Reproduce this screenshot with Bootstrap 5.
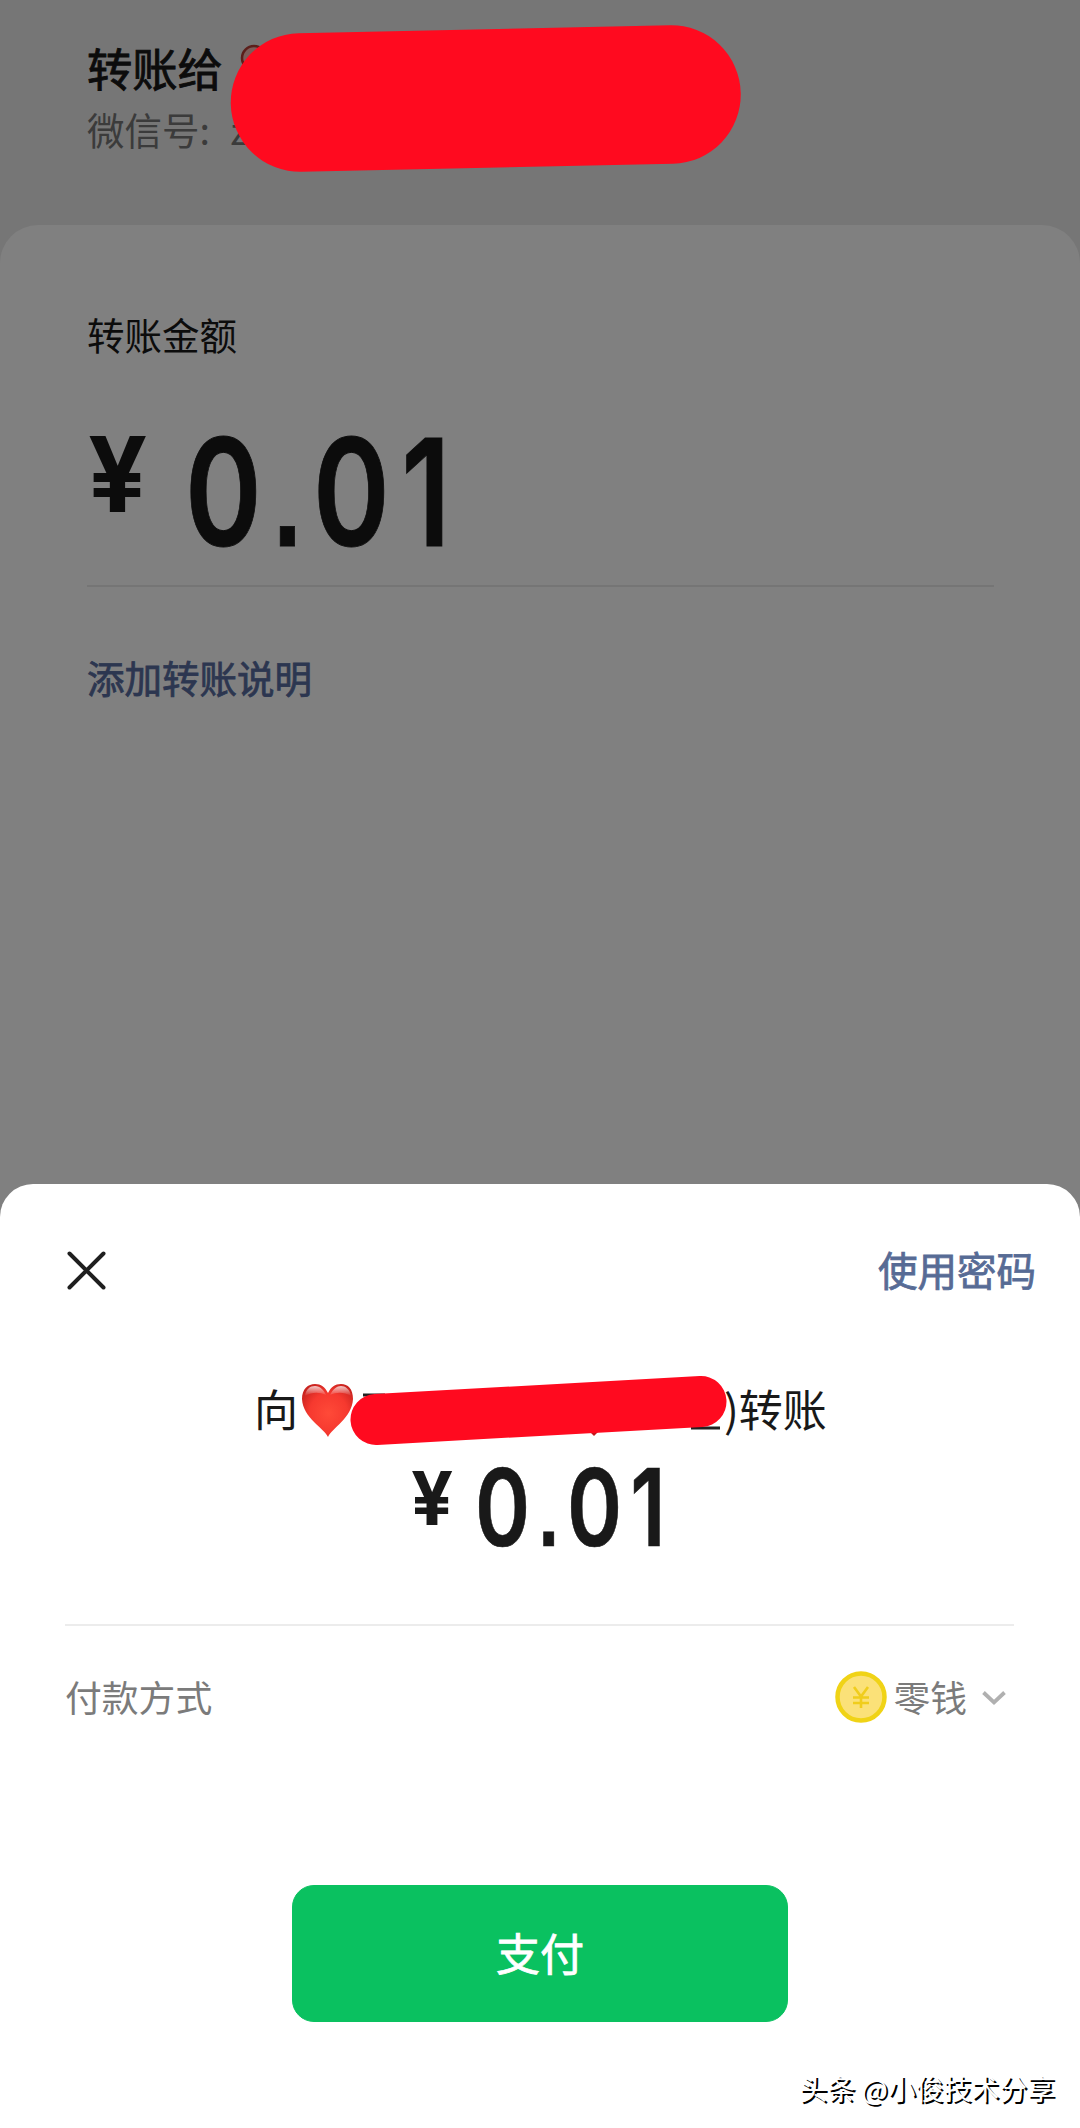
<!DOCTYPE html>
<html lang="zh-CN">
<head>
<meta charset="utf-8">
<meta name="viewport" content="width=device-width, initial-scale=1">
<title>转账</title>
<link href="https://cdn.jsdelivr.net/npm/bootstrap@5.3.0/dist/css/bootstrap.min.css" rel="stylesheet">
<style>
body{font-family:"Noto Sans CJK SC",sans-serif;background:#767676;color:#0c0c0c}
.screen{width:1080px;height:2128px;background:#767676}
.payee{height:225px;padding:42px 87px 0}
.payee-name{font-size:45.3px;line-height:50px;-webkit-text-stroke:.9px}
.payee-id{font-size:37.5px;line-height:50px;margin-top:12px;color:#3b3b3b}
.id-value{margin-left:12px}
.amount-panel{height:997px;background:#808080;border-radius:38px 38px 0 0;padding:84px 86px 0 87px}
.panel-label{font-size:37.5px;line-height:50px;height:50px}
.amount-row{height:228px;padding-top:59px;border-bottom:2px solid #757575}
.fig{font-family:Inter,sans-serif;font-weight:600;line-height:1;white-space:nowrap}
.fig-num{transform-origin:0 0;transform:scaleX(.78);letter-spacing:.1em;-webkit-text-stroke:.006em}
.fig-dot{font-family:"Liberation Sans",sans-serif;font-weight:700;font-size:.88em;line-height:0;letter-spacing:.11em}
.fig-big{font-size:149px;width:255px;margin-left:34px}
.yen-big{font-size:104px;font-weight:700;width:63px;padding-top:4px;margin-left:1px}
.note-link{font-size:37.5px;line-height:50px;margin-top:65px;color:#2c3650;-webkit-text-stroke:.8px}
.sheet{height:944px;margin-top:-38px;background:#fff;border-radius:33px 33px 0 0;color:#191919;position:relative}
.sheet-bar{height:124px;padding:48px 44px 0 66px}
.pwd-link{font-size:39.5px;color:#576b95;-webkit-text-stroke:.8px;margin-top:-2px}
.to-line{height:70px;font-size:44px;line-height:70px;padding-left:254px;margin-top:65px}
.hidden-name{width:370px}
.sum-row{height:85px;padding:11px 0 0 411px}
.fig-small{font-size:107px;width:190px;margin-left:19px}
.yen-small{font-size:74px;font-weight:700;width:45px;padding-top:7px}
.method{margin:96px 66px 0 65px;height:143px;border-top:2px solid #ececec;font-size:36.8px;color:#7b7b7b}
.method-pick{margin-right:8px}
.pick-name{margin-left:6px}
.pick-arrow{margin:3px 0 0 15px}
.pay-area{margin-top:118px}
.pay-btn{--bs-btn-bg:#0ac160;--bs-btn-color:#fff;--bs-btn-border-color:#0ac160;width:496px;height:137px;padding-bottom:10px;border-radius:22px;font-size:44px;-webkit-text-stroke:.8px}
.watermark{right:25px;bottom:18px;font-size:27.9px;line-height:44px;color:#fff;text-shadow:2px 2px 0 #000}
.redact{left:0;top:0;pointer-events:none}
</style>
</head>
<body>
<main class="screen position-relative overflow-hidden">
  <header class="payee">
    <div class="payee-name">转账给</div>
    <div class="payee-id">微信号: <span class="id-value">z</span></div>
  </header>
  <section class="amount-panel">
    <div class="panel-label">转账金额</div>
    <div class="amount-row d-flex">
      <div class="fig yen-big">¥</div>
      <div class="fig fig-num fig-big">0<span class="fig-dot">.</span>01</div>
    </div>
    <div class="note-link">添加转账说明</div>
  </section>
  <section class="sheet">
    <div class="sheet-bar d-flex justify-content-between align-items-center">
      <svg width="40" height="40" viewBox="0 0 40 40" stroke="#1f1f1f" stroke-width="4" stroke-linecap="round"><path d="M3.500 3.500 37.500 37.500M37.500 3.500 3.500 37.500"/></svg>
      <span class="pwd-link">使用密码</span>
    </div>
    <div class="to-line d-flex align-items-center">
      <span>向</span>
      <svg width="56" height="60" viewBox="0 0 56 60">
        <defs>
          <radialGradient id="heart" cx=".52" cy=".55" r=".62"><stop offset="0" stop-color="#ff4a38"/><stop offset=".6" stop-color="#f6392f"/><stop offset="1" stop-color="#c9231f"/></radialGradient>
          <linearGradient id="shine" x2="0" y2="1"><stop offset="0" stop-color="#fff" stop-opacity=".75"/><stop offset="1" stop-color="#fff" stop-opacity="0"/></linearGradient>
        </defs>
        <path fill="url(#heart)" d="M30 59C26 50 5 40 4 21 4 11 10 6 17 6c6 0 10 3 13 9C33 9 37 6 43 6c7 0 12 5 12 15C54 40 34 50 30 59Z"/>
        <path fill="url(#shine)" d="M7 18C8 11 12 8 17 8s9 4 11 9c-7-3-14-3-21 1ZM32 17c3-6 7-9 11-9s9 3 10 10c-7-4-14-4-21-1Z"/>
      </svg>
      <span class="hidden-name"></span>
      <span>)转账</span>
    </div>
    <div class="sum-row d-flex">
      <div class="fig yen-small">¥</div>
      <div class="fig fig-num fig-small">0<span class="fig-dot">.</span>01</div>
    </div>
    <div class="method d-flex justify-content-between align-items-center">
      <span>付款方式</span>
      <span class="method-pick d-flex align-items-center">
        <svg width="52" height="52" viewBox="0 0 52 52"><circle cx="26" cy="26" r="23.500" fill="#fbe178" stroke="#f0d316" stroke-width="4.500"/><path d="m19 16 7 9.500 7-9.500M26 25.500V37M18 26.500h16M18 32h16" fill="none" stroke="#f0cd1c" stroke-width="2.600"/></svg>
        <span class="pick-name">零钱</span>
        <svg class="pick-arrow" width="24" height="16" viewBox="0 0 24 16"><path d="m1.500 2.500 10.500 10 10.500-10" fill="none" stroke="#b0b0b0" stroke-width="3.800"/></svg>
      </span>
    </div>
    <div class="pay-area d-flex justify-content-center">
      <button class="btn pay-btn" type="button">支付</button>
    </div>
    <div class="watermark position-absolute">头条 @小俊技术分享</div>
  </section>
  <svg class="redact position-absolute" width="1080" height="1500" viewBox="0 0 1080 1500" fill="none">
    <circle cx="254" cy="58" r="12" stroke="#5c1e1a" stroke-width="2.500" fill="#7d5b58"/>
    <path d="M363 1395h22M691 1428h29" stroke="#222" stroke-width="3"/>
    <path d="m589 1431 5 5 5-5Z" fill="#c4161c"/>
    <g stroke="#ff0a1f" stroke-linecap="round">
      <path stroke-width="138.500" d="m300 102.500 371.500-8"/>
      <path stroke-width="51" d="m376 1419.500 325-18"/>
    </g>
  </svg>
</main>
<script src="https://cdn.jsdelivr.net/npm/bootstrap@5.3.0/dist/js/bootstrap.bundle.min.js"></script>
</body>
</html>
